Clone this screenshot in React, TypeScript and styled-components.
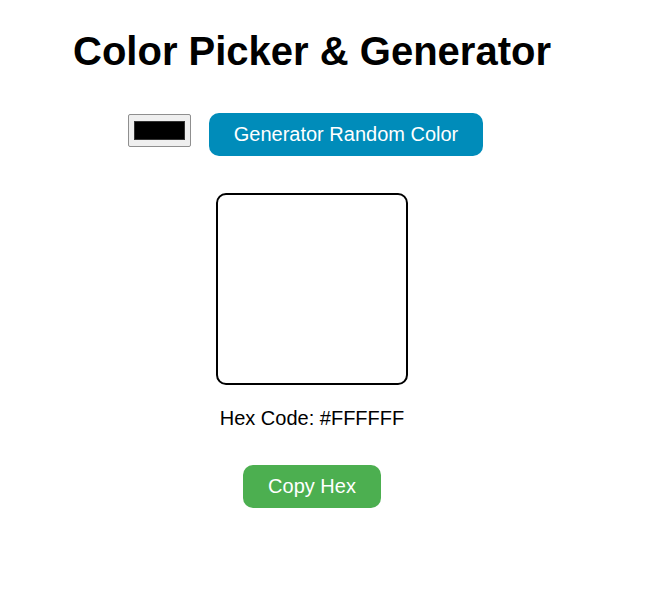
import { useState } from 'react'
import styled, { createGlobalStyle } from 'styled-components'

const GlobalStyle = createGlobalStyle`
body {
    margin: 0;
    background: #ffffff;
    font-family: "Liberation Sans", Arial, sans-serif;
}
`

const randomHex = () =>
    '#' + Math.floor(Math.random() * 0xffffff).toString(16).padStart(6, '0').toUpperCase()

const App = () => {
    const [picked, setPicked] = useState('#000000')
    const [color, setColor] = useState('#FFFFFF')

    return (
        <div>
            <GlobalStyle />
            <Container>
                <Title>Color Picker &amp; Generator</Title>

                <Controls>
                    <ColorInput
                        type="color"
                        value={picked}
                        onChange={(e) => {
                            setPicked(e.target.value)
                            setColor(e.target.value.toUpperCase())
                        }}
                    />
                    <Button $bg="#008cba" onClick={() => setColor(randomHex())}>
                        Generator Random Color
                    </Button>
                </Controls>

                <Preview style={{ backgroundColor: color }} />

                <HexText>Hex Code: {color}</HexText>

                <Button
                    $bg="#4caf50"
                    onClick={() => {
                        navigator.clipboard?.writeText(color).catch(() => {})
                    }}
                >Copy Hex</Button>
            </Container>
        </div>
    )
}

export default App

const Container = styled.div`
width: 624px;
display: flex;
flex-direction: column;
align-items: center;
padding-top: 28px;
color: #000;
`

const Title = styled.h1`
margin: 0;
font-size: 40px;
font-weight: bold;
line-height: 46px;
`

const Controls = styled.div`
display: flex;
align-items: flex-start;
gap: 18px;
margin-top: 39px;
margin-left: -13px;
`

const ColorInput = styled.input`
width: 63px;
height: 33px;
margin: 1px 0 0 0;
padding: 2px 3px;
box-sizing: border-box;
border: 1px solid #8f8f8f;
border-radius: 2px;
background: #efefef;
cursor: pointer;

&::-webkit-color-swatch-wrapper {
    padding: 4px 2px;
}
&::-webkit-color-swatch {
    border: 1px solid #333;
    border-radius: 0;
}
`

const Button = styled.button<{ $bg: string }>`
padding: 10px 25px;
font-family: "Liberation Sans", Arial, sans-serif;
font-size: 20px;
line-height: 23px;
color: white;
background-color: ${(p) => p.$bg};
border: none;
border-radius: 10px;
cursor: pointer;
`

const Preview = styled.div`
width: 192px;
height: 192px;
box-sizing: border-box;
margin-top: 37px;
border: 2px solid #000;
border-radius: 10px;
`

const HexText = styled.p`
margin: 22px 0 35px 0;
font-size: 20px;
line-height: 23px;
`
